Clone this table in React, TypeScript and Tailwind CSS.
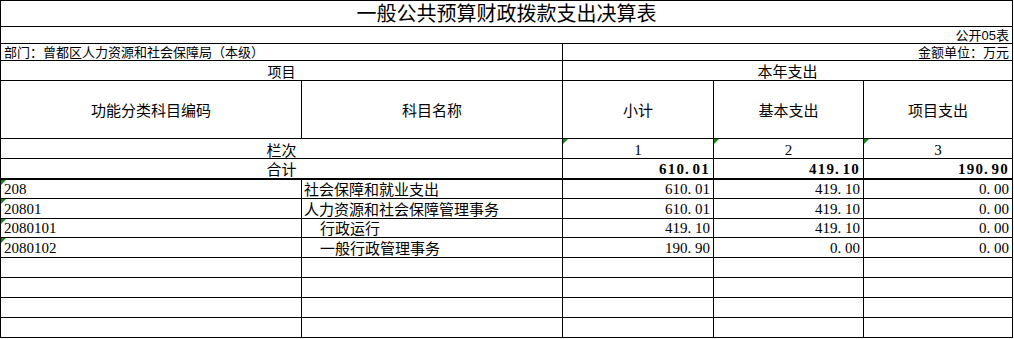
import React from "react";

const cjk = "font-['Liberation_Sans','Noto_Sans_CJK_SC',sans-serif]";
const num = "font-['Liberation_Serif','Noto_Sans_CJK_SC',serif]";

type Row = {
  code: string;
  name: string;
  indent?: boolean;
  total: string;
  basic: string;
  project: string;
};

const rows: Row[] = [
  { code: "208", name: "社会保障和就业支出", total: "610.01", basic: "419.10", project: "0.00" },
  { code: "20801", name: "人力资源和社会保障管理事务", total: "610.01", basic: "419.10", project: "0.00" },
  { code: "2080101", name: "行政运行", indent: true, total: "419.10", basic: "419.10", project: "0.00" },
  { code: "2080102", name: "一般行政管理事务", indent: true, total: "190.90", basic: "0.00", project: "0.00" },
];

// first row is 1px shorter because the thick rule above it eats a pixel
const rowHeights = ["h-[19px]", "h-[20px]", "h-[19px]", "h-[20px]", "h-[20px]", "h-[20px]", "h-[20px]", "h-[20px]"];

// number with SimSun-like half-width period
function Num({ value, bold }: { value: string; bold?: boolean }) {
  const [a, b] = value.split(".");
  return (
    <span className={`${num} text-[15px] leading-none pt-[1px] ${bold ? "font-bold tracking-[1.2px]" : ""}`}>
      {a}
      <span className="inline-block w-[0.5em]">.</span>
      {b}
    </span>
  );
}

function Flag() {
  return (
    <span className="absolute left-0 top-0 w-0 h-0 border-t-[5px] border-r-[5px] border-t-[#118a11] border-r-transparent" />
  );
}

const cell = "box-border border-r border-b border-black flex items-center shrink-0";

export default function App() {
  return (
    <div className="bg-white w-[1014px] h-[339px] overflow-hidden text-black">
      <div className="w-[1013px] border-t border-l border-black">
        {/* Title */}
        <div className={`${cell} w-[1012px] h-[26px] justify-center`}>
          <span className={`${cjk} text-[20px] leading-none`}>一般公共预算财政拨款支出决算表</span>
        </div>

        <div className={`${cell} w-[1012px] h-[17px] justify-end pr-[3px]`}>
          <span className={`${cjk} text-[13px] leading-none`}>公开05表</span>
        </div>

        <div className="flex">
          <div className={`${cell} w-[562px] h-[17px] pl-[3px]`}>
            <span className={`${cjk} text-[13px] leading-none`}>部门：曾都区人力资源和社会保障局（本级）</span>
          </div>
          <div className={`${cell} w-[450px] h-[17px] justify-end pr-[3px]`}>
            <span className={`${cjk} text-[13px] leading-none`}>金额单位：万元</span>
          </div>
        </div>

        <div className="flex">
          <div className={`${cell} w-[562px] h-[20px] justify-center`}>
            <span className={`${cjk} text-[14px] leading-none pt-[2px]`}>项目</span>
          </div>
          <div className={`${cell} w-[450px] h-[20px] justify-center`}>
            <span className={`${cjk} text-[15px] leading-none pt-[2px]`}>本年支出</span>
          </div>
        </div>

        <div className="flex">
          {[
            ["功能分类科目编码", "w-[301px]"],
            ["科目名称", "w-[261px]"],
            ["小计", "w-[151px]"],
            ["基本支出", "w-[150px]"],
            ["项目支出", "w-[149px]"],
          ].map(([t, w]) => (
            <div key={t} className={`${cell} ${w} h-[58px] justify-center`}>
              <span className={`${cjk} text-[15px] leading-none pt-[2px]`}>{t}</span>
            </div>
          ))}
        </div>

        {/* 栏次 */}
        <div className="flex">
          <div className={`${cell} w-[562px] h-[20px] justify-center`}>
            <span className={`${cjk} text-[15px] leading-none pt-[3px]`}>栏次</span>
          </div>
          {[
            ["1", "w-[151px]"],
            ["2", "w-[150px]"],
            ["3", "w-[149px]"],
          ].map(([t, w]) => (
            <div key={t} className={`${cell} ${w} h-[20px] justify-center relative`}>
              <Flag />
              <span className={`${num} text-[15px] leading-none pt-[4px]`}>{t}</span>
            </div>
          ))}
        </div>

        {/* 合计 */}
        <div className="flex">
          <div className={`${cell} w-[562px] h-[20px] justify-center`}>
            <span className={`${cjk} text-[15px] leading-none pt-[1px]`}>合计</span>
          </div>
          <div className={`${cell} w-[151px] h-[20px] justify-end pr-[3px]`}>
            <Num value="610.01" bold />
          </div>
          <div className={`${cell} w-[150px] h-[20px] justify-end pr-[3px]`}>
            <Num value="419.10" bold />
          </div>
          <div className={`${cell} w-[149px] h-[20px] justify-end pr-[3px]`}>
            <Num value="190.90" bold />
          </div>
        </div>

        {/* data rows */}
        {rowHeights.map((h, i) => {
          const r = rows[i];
          const first = i === 0 ? "border-t border-black" : "";
          return (
            <div key={i} className={`flex ${first}`}>
              <div className={`${cell} w-[301px] ${h} pl-[3px] relative`}>
                {r && <Flag />}
                {r && <span className={`${num} text-[15px] leading-none pt-[1px]`}>{r.code}</span>}
              </div>
              <div className={`${cell} w-[261px] ${h} ${r?.indent ? "pl-[18px]" : "pl-[2px]"}`}>
                {r && <span className={`${cjk} text-[15px] leading-none pt-[1px]`}>{r.name}</span>}
              </div>
              <div className={`${cell} w-[151px] ${h} justify-end pr-[3px]`}>
                {r && <Num value={r.total} />}
              </div>
              <div className={`${cell} w-[150px] ${h} justify-end pr-[3px]`}>
                {r && <Num value={r.basic} />}
              </div>
              <div className={`${cell} w-[149px] ${h} justify-end pr-[3px]`}>
                {r && <Num value={r.project} />}
              </div>
            </div>
          );
        })}
      </div>
    </div>
  );
}
